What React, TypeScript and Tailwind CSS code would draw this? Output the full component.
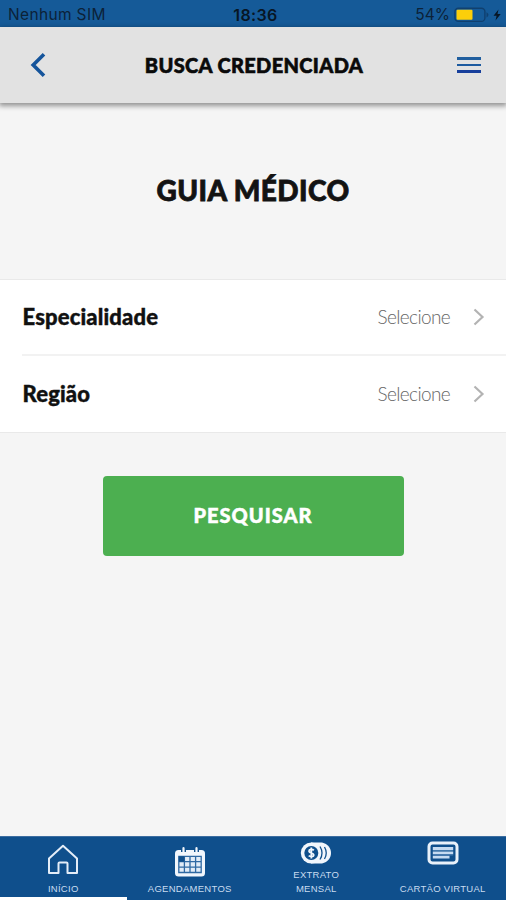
import type { ReactNode } from "react"

type SelectRowProps = {
    label: string,
    value: string,
}

type TabProps = {
    lines: string[],
    icon: ReactNode,
    active?: boolean,
}

const StatusBar = () => {
    return (
        <div className="flex h-[27px] shrink-0 items-center bg-[#155a98] pl-2 pr-[5px] pt-[2px] font-['Inter',sans-serif] text-[#0c2238]">
            <span className="w-[170px] text-[15.5px] leading-4 tracking-[0.35px]">Nenhum SIM</span>
            <span className="flex-1 text-center text-[16px] font-semibold leading-4 tracking-[0.4px] text-[#071625] pr-[4px]">18:36</span>
            <div className="flex w-[164px] items-center justify-end">
                <span className="text-[15.5px] leading-4">54%</span>
                <svg width="37" height="16" viewBox="0 0 37 16" className="ml-1">
                    <rect x="0.9" y="1.2" width="30" height="13.2" rx="3.5" fill="none" stroke="#10406f" strokeWidth="1.4" />
                    <rect x="2.5" y="2.8" width="16" height="10" rx="1" fill="#fccf0a" />
                    <path d="M32.5 5.2 Q36.5 7.8 32.5 10.4Z" fill="#10406f" />
                </svg>
                <svg width="8" height="12" viewBox="0 0 8 12" className="ml-[2px]">
                    <path d="M5.5 0.5 L0.5 6.7 H3.6 L2.5 11.5 L7.7 5 H4.5Z" fill="#071625" />
                </svg>
            </div>
        </div>
    )
}

const Header = () => {
    return (
        <header className="relative flex h-[76px] shrink-0 items-center justify-between bg-[#e2e2e2] pl-[30px] pr-[25px] shadow-[0_2px_5px_1px_rgba(0,0,0,0.4)]">
            <button aria-label="Voltar">
                <svg width="16" height="26" viewBox="0 0 16 26" fill="none" stroke="#15549b" strokeWidth="3.6">
                    <path d="M14 2.2 L3.2 13 L14 23.8" />
                </svg>
            </button>
            <h1 className="-mt-px pl-[5px] text-[20px] font-black leading-6 tracking-[0.35px] text-[#0a0a0a] [-webkit-text-stroke:0.6px]">BUSCA CREDENCIADA</h1>
            <button aria-label="Menu" className="flex w-6 flex-col gap-1">
                <span className="h-[2.8px] bg-[#215f9f]" />
                <span className="h-[2.8px] bg-[#1d5ba0]" />
                <span className="h-[2.8px] bg-[#173f9c]" />
            </button>
        </header>
    )
}

const SelectRow = ({ label, value }: SelectRowProps) => {
    return (
        <div className="flex h-full items-center pr-[21px]">
            <span className="flex-1 pl-[0.5px] text-[22px] font-black leading-7 tracking-[0.15px] text-[#111] [-webkit-text-stroke:0.4px]">{label}</span>
            <span className="text-[19px] font-light leading-7 tracking-[-0.65px] text-[#666]">{value}</span>
            <svg width="12" height="18" viewBox="0 0 12 18" className="ml-[23px]" fill="none" stroke="#b3b3b3" strokeWidth="2.2">
                <path d="M1.5 1.5 L9.5 9 L1.5 16.5" />
            </svg>
        </div>
    )
}

const HomeIcon = () => (
    <svg width="32" height="31" viewBox="0 0 32 31" fill="none" stroke="#e4edf8" strokeWidth="2" strokeLinejoin="round">
        <path d="M2 14.5 L16 1.7 L30 14.5 V29 H20.5 V19.5 Q20.5 18.5 19.5 18.5 H12.5 Q11.5 18.5 11.5 19.5 V29 H2Z" />
    </svg>
)

const CalendarIcon = () => (
    <svg width="32" height="30" viewBox="0 0 32 30">
        <rect x="1" y="3" width="30" height="26.5" rx="3.5" fill="#f1f6fc" />
        <path d="M9.5 0.5 V5 M22.5 0.5 V5" stroke="#0f4f8c" strokeWidth="5" />
        <path d="M9.5 1.2 V5.5 M22.5 1.2 V5.5" stroke="#f1f6fc" strokeWidth="2.2" strokeLinecap="round" />
        <path d="M4.8 9.3 H27.2 V25.5 H4.8Z M10.4 9.3 V25.5 M16 9.3 V25.5 M21.6 9.3 V25.5 M4.8 14.7 H27.2 M4.8 20.1 H27.2" fill="#e2ecf7" stroke="#2f69a3" strokeWidth="1.3" />
        <path d="M4.8 9.3 H10.4 V14.7 H4.8Z" fill="#0f4f8c" />
    </svg>
)

const CoinsIcon = () => (
    <svg width="32" height="22" viewBox="0 0 32 22">
        <path d="M11 0.5 H22 C28 2 31 6 31 11 S28 20 22 21.5 H11Z" fill="#f1f6fc" />
        <circle cx="11.3" cy="11" r="10.5" fill="#f1f6fc" />
        <circle cx="11.3" cy="11" r="7" fill="#0f4f8c" />
        <path d="M13.8 8.3 C12.5 6.8 9 7.2 9 9.2 S13.8 11 13.8 12.9 S10.3 15 8.7 13.6 M11.3 5.5 V16.5" fill="none" stroke="#f1f6fc" strokeWidth="1.8" />
        <path d="M20 4.5 Q24 11 20 17.5 M24.5 5 Q28 11 24.5 17" fill="none" stroke="#0f4f8c" strokeWidth="1.3" />
    </svg>
)

const CardIcon = () => (
    <svg width="32" height="24" viewBox="0 0 32 24" fill="none">
        <rect x="2" y="2" width="28" height="20" rx="3.5" stroke="#e9f1fa" strokeWidth="3" />
        <path d="M5.8 7.5 H26.2 M5.8 11.8 H26.2 M5.8 16.1 H22.5" stroke="#c6dbf1" strokeWidth="2.8" />
        <path d="M5.8 9.7 H26.2 M5.8 13.9 H26.2" stroke="#4f83b6" strokeWidth="1" />
    </svg>
)

const Tab = ({ lines, icon, active }: TabProps) => {
    return (
        <a className={active ? "flex flex-col items-center border-b-[3px] border-white" : "flex flex-col items-center border-b-[3px] border-[#0f4f8c]"}>
            {icon}
            <div className="mt-auto pb-px text-center">
                {lines.map((line) => (
                    <p key={line} className="text-[9.5px] leading-[14px] tracking-[0.27px] text-[#c9dcf0]">{line}</p>
                ))}
            </div>
        </a>
    )
}

export default function App() {
    return (
        <div className="flex h-[900px] w-[506px] flex-col overflow-hidden bg-[#f5f5f5] font-['Lato',sans-serif]">
            <StatusBar />
            <Header />
            <main className="flex flex-1 flex-col">
                <h2 className="mt-[69px] text-center text-[28px] font-black leading-9 tracking-[0.45px] text-[#131313] [-webkit-text-stroke:0.8px]">GUIA MÉDICO</h2>
                <section className="mt-[71px] flex h-[154px] flex-col border-y border-[#e9e9e9] bg-white pl-[22px]">
                    <div className="h-[76px] border-b-2 border-[#f2f2f2]">
                        <SelectRow label="Especialidade" value="Selecione" />
                    </div>
                    <div className="h-[76px]">
                        <SelectRow label="Região" value="Selecione" />
                    </div>
                </section>
                <button className="mx-auto mt-[43px] h-[80px] w-[301px] rounded-[4px] bg-[#4caf50] pb-[2px] text-[20px] font-black tracking-[1px] text-white [-webkit-text-stroke:0.5px]">PESQUISAR</button>
            </main>
            <nav className="grid h-[64px] shrink-0 grid-cols-4 border-t border-[#3c6da0] bg-[#0f4f8c] font-['Liberation_Sans',sans-serif]">
                <Tab lines={["INÍCIO"]} icon={<div className="pt-[7px]"><HomeIcon /></div>} active />
                <Tab lines={["AGENDAMENTOS"]} icon={<div className="pt-[10px]"><CalendarIcon /></div>} />
                <Tab lines={["EXTRATO", "MENSAL"]} icon={<div className="pt-[5px]"><CoinsIcon /></div>} />
                <Tab lines={["CARTÃO VIRTUAL"]} icon={<div className="pt-[4px]"><CardIcon /></div>} />
            </nav>
        </div>
    )
}
